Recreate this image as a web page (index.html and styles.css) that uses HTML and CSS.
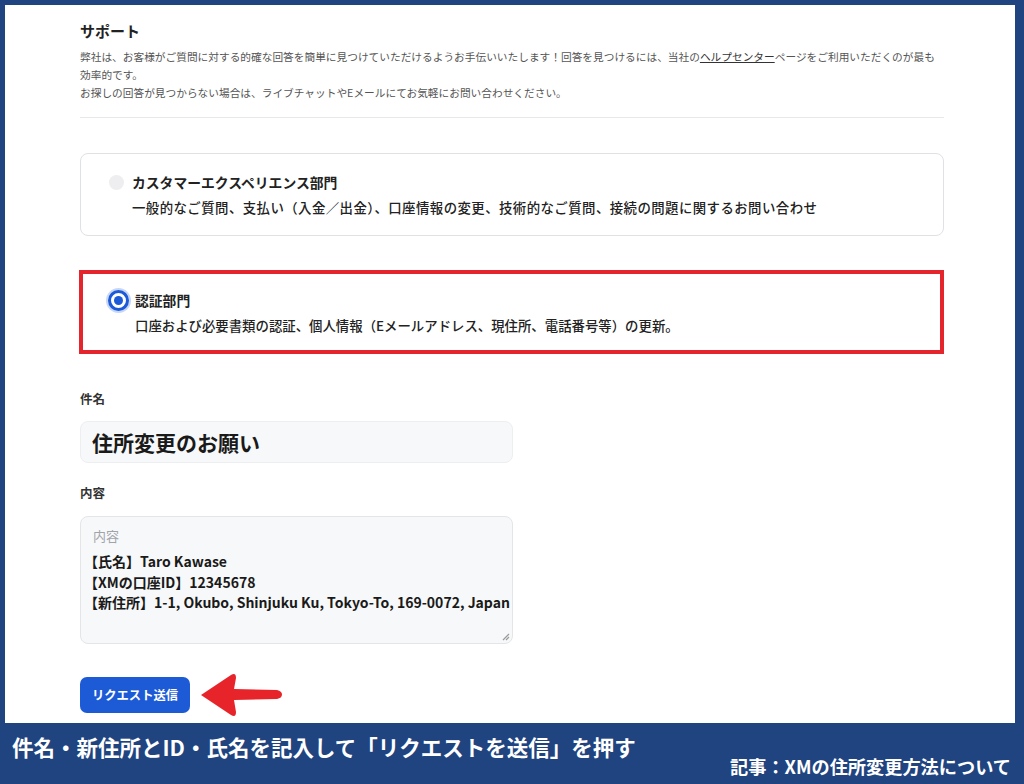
FILE: index.html
```html
<!DOCTYPE html>
<html lang="ja">
<head>
<meta charset="utf-8">
<link rel="stylesheet" href="styles.css">
</head>
<body>
<div class="frame">
  <div class="panel">
    <h1 class="title">サポート</h1>
    <p class="intro">弊社は、お客様がご質問に対する的確な回答を簡単に見つけていただけるようお手伝いいたします！回答を見つけるには、当社の<span class="link">ヘルプセンター</span>ページをご利用いただくのが最も効率的です。<br>お探しの回答が見つからない場合は、ライブチャットやEメールにてお気軽にお問い合わせください。</p>
    <hr class="sep">

    <div class="card">
      <span class="radio"></span>
      <div class="card-body">
        <div class="card-title">カスタマーエクスペリエンス部門</div>
        <div class="card-desc card-desc-wide">一般的なご質問、支払い（入金／出金）、口座情報の変更、技術的なご質問、接続の問題に関するお問い合わせ</div>
      </div>
    </div>

    <div class="card card-selected">
      <span class="radio radio-on"></span>
      <div class="card-body">
        <div class="card-title">認証部門</div>
        <div class="card-desc">口座および必要書類の認証、個人情報（Eメールアドレス、現住所、電話番号等）の更新。</div>
      </div>
    </div>

    <div class="label label-subject">件名</div>
    <div class="input">住所変更のお願い</div>

    <div class="label label-content">内容</div>
    <div class="textarea">
      <div class="placeholder">内容</div>
      <div class="ta-text">【氏名】Taro Kawase<br>【XMの口座ID】12345678<br>【新住所】1-1, Okubo, Shinjuku Ku, Tokyo-To, 169-0072, Japan</div>
      <svg class="grip" width="10" height="10" viewBox="0 0 10 10"><path d="M9 3 L3 9 M9 6 L6 9" stroke="#9a9a9a" stroke-width="1.2" fill="none"/></svg>
    </div>

    <div class="actions">
      <button class="btn">リクエスト送信</button>
      <svg class="arrow" width="84" height="46" viewBox="0 0 84 46"><path d="M2 22 L32 2 Q37 -1 37 5 L35 16 L78 17 Q83 18 83 21.5 Q83 25 78 26 L35 27 L37 39 Q37 45 32 42 Z" fill="#e8242b"/></svg>
    </div>
  </div>
  <div class="footer">
    <div class="caption">件名・新住所とID・氏名を記入して「リクエストを送信」を押す</div>
    <div class="source">記事：XMの住所変更方法について</div>
  </div>
</div>
</body>
</html>
```

FILE: styles.css
```css
* { box-sizing: border-box; }
html, body { margin: 0; padding: 0; }
body {
  width: 1024px;
  height: 784px;
  background: #1f4480;
  font-family: "Noto Sans CJK JP", "Noto Sans", sans-serif;
  color: #1f2328;
  overflow: hidden;
}
.frame { display: flex; flex-direction: column; height: 784px; }
.panel {
  margin: 5px 9px 0 5px;
  height: 718px;
  background: #ffffff;
  padding: 15px 71px 0 75px;
  display: flex;
  flex-direction: column;
}
.title {
  margin: 0;
  font-size: 15px;
  line-height: 22px;
  font-weight: 700;
  color: #222;
}
.intro {
  margin: 6px 0 0;
  font-size: 10.7px;
  line-height: 18px;
  color: #555;
}
.link { text-decoration: underline; color: #333; }
.sep {
  margin: 15px 0 0;
  border: 0;
  border-top: 1px solid #e8e8ea;
  height: 0;
}
.card {
  margin-top: 35px;
  border: 1px solid #dfe1e5;
  border-radius: 8px;
  padding: 18px 16px 18px 28px;
  display: flex;
  align-items: flex-start;
  gap: 8px;
  min-height: 83px;
}
.card-selected {
  margin-top: 34px;
  margin-left: -1px;
  border: 4px solid #e4262c;
  border-radius: 0;
  padding: 16px 16px 13px 25px;
  min-height: 84px;
  gap: 6px;
}
.radio {
  flex: none;
  width: 15px;
  height: 15px;
  border-radius: 50%;
  background: #eeeef0;
  margin-top: 3px;
}
.radio-on {
  width: 21px;
  height: 21px;
  margin-top: 0;
  background: #ffffff;
  border: 3px solid #1d5ad8;
  box-shadow: 0 0 0 2px #c7d7f6;
  position: relative;
}
.radio-on::after {
  content: "";
  position: absolute;
  left: 3px; top: 3px;
  width: 9px; height: 9px;
  border-radius: 50%;
  background: #1d5ad8;
}
.card-title {
  font-size: 13.8px;
  line-height: 20px;
  font-weight: 700;
  color: #222;
}
.card-desc {
  margin-top: 5px;
  font-size: 13.4px;
  line-height: 20px;
  font-weight: 500;
  color: #222;
}
.card-desc-wide { letter-spacing: 0.45px; }
.label {
  font-size: 12.5px;
  line-height: 18px;
  font-weight: 700;
  color: #333;
}
.label-subject { margin-top: 36px; }
.label-content { margin-top: 21px; }
.input {
  margin-top: 13px;
  width: 433px;
  height: 42px;
  background: #f7f8f9;
  border: 1px solid #eceef0;
  border-radius: 8px;
  padding: 0 11px;
  font-size: 21px;
  line-height: 40px;
  font-weight: 700;
  color: #1a1a1a;
}
.textarea {
  margin-top: 14px;
  width: 433px;
  height: 128px;
  background: #f7f8f9;
  border: 1px solid #e3e5e8;
  border-radius: 8px;
  padding: 9px 4px 0 3px;
  position: relative;
}
.placeholder {
  padding-left: 9px;
  font-size: 13px;
  line-height: 20px;
  color: #a0a4aa;
}
.ta-text {
  margin-top: 5px;
  font-size: 14px;
  line-height: 20.5px;
  font-weight: 700;
  color: #1a1a1a;
  white-space: nowrap;
}
.grip { position: absolute; right: 2px; bottom: 2px; }
.actions {
  margin-top: 27px;
  display: flex;
  align-items: center;
  gap: 9px;
}
.btn {
  width: 110px;
  height: 36px;
  border: 0;
  border-radius: 7px;
  background: #1c5ad6;
  color: #ffffff;
  font-family: "Noto Sans CJK JP", "Noto Sans", sans-serif;
  font-size: 12.3px;
  font-weight: 700;
  padding: 0;
}
.arrow { display: block; margin-top: 2px; }
.footer {
  flex: 1;
  display: flex;
  justify-content: space-between;
  align-items: flex-start;
  padding: 11px 13px 0 12px;
  color: #ffffff;
  font-weight: 700;
}
.caption { font-size: 21.5px; line-height: 26px; }
.source { font-size: 18.2px; line-height: 24px; margin-top: 20px; }
```
